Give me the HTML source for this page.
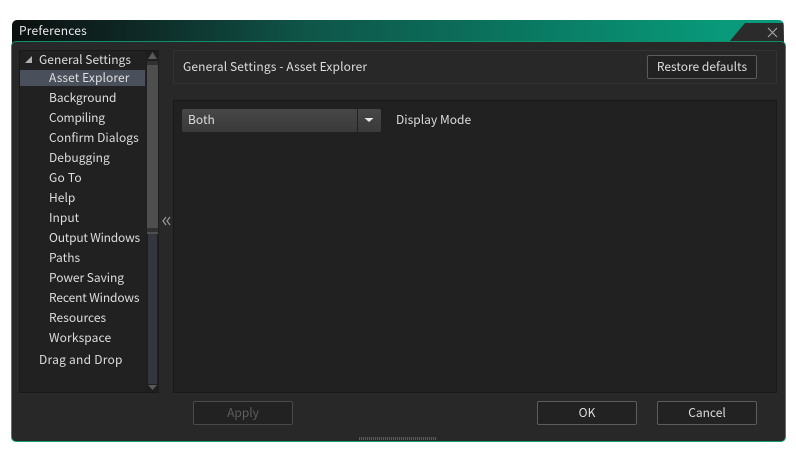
<!DOCTYPE html>
<html><head><meta charset="utf-8"><style>
html,body{margin:0;padding:0;background:#fff;width:796px;height:460px;overflow:hidden}
*{box-sizing:border-box}
body{font-family:"Noto Sans CJK JP","DejaVu Sans","Liberation Sans",sans-serif;font-size:12px;color:#dedede}
.a{position:absolute}
.t{position:absolute;white-space:nowrap;line-height:16px;height:16px;letter-spacing:.03px}
.btn{position:absolute;height:24px;width:100px;border:1px solid #5c5c5c;border-radius:2px;background:#222;text-align:center;line-height:21px;color:#dedede}
</style></head><body>
<div class="a" style="left:12px;top:20px;width:772px;height:30px;border-radius:5px 5px 0 0;background:linear-gradient(90deg,#0c0f0f 0%,#0e2c28 18%,#0f5548 38%,#0b6f5b 60%,#089a7a 92%,#089a7a 100%)"></div>
<svg class="a" style="left:729px;top:23px" width="56" height="20"><polygon points="0,19 16,0 54,0 55,19" fill="#2b2b2b"/><path d="M39 5L48 14M48 5L39 14" stroke="#a9a9a9" stroke-width="1.1" fill="none"/></svg>
<div class="t" style="left:19px;top:23px;color:#e8e8e8;letter-spacing:.2px">Preferences</div>
<div class="a" style="left:11px;top:41px;width:775px;height:401px;border:1px solid #17996f;border-top-color:#0e9068;border-radius:5px;background:#282828"></div>
<div class="a" style="left:19px;top:50px;width:140px;height:343px;background:#212121;border:1px solid #191919"></div>
<div class="a" style="left:20px;top:70px;width:125px;height:16px;background:#4a505b"></div>
<div class="a" style="left:146px;top:51px;width:13px;height:341px;background:#1e1e1e"></div>
<div class="a" style="left:147px;top:64px;width:11px;height:170px;background:#4e4e4e"></div>
<div class="a" style="left:147px;top:228px;width:11px;height:4px;background:#303030"></div>
<div class="a" style="left:147px;top:61px;width:11px;height:4px;background:#303030"></div>
<div class="a" style="left:148px;top:234px;width:9px;height:150px;background:#33373d"></div>
<svg class="a" style="left:146px;top:51px" width="13" height="10"><polygon points="6.5,1 11,8 2,8" fill="#5a5a5a"/></svg>
<svg class="a" style="left:146px;top:384px" width="13" height="8"><polygon points="2,1 11,1 6.5,6" fill="#5a5a5a"/></svg>
<svg class="a" style="left:24px;top:55px" width="10" height="10"><polygon points="1,8 8,8 8,1" fill="#b0b0b0"/></svg>
<div class="t" style="left:39px;top:52px">General Settings</div>
<div class="t" style="left:49px;top:70px;letter-spacing:.1px">Asset Explorer</div>
<div class="t" style="left:49px;top:90px;letter-spacing:-.05px">Background</div>
<div class="t" style="left:49px;top:110px;letter-spacing:-.2px">Compiling</div>
<div class="t" style="left:49px;top:130px">Confirm Dialogs</div>
<div class="t" style="left:49px;top:150px">Debugging</div>
<div class="t" style="left:49px;top:170px;letter-spacing:.2px">Go To</div>
<div class="t" style="left:49px;top:190px">Help</div>
<div class="t" style="left:49px;top:210px">Input</div>
<div class="t" style="left:49px;top:230px;letter-spacing:-.2px">Output Windows</div>
<div class="t" style="left:49px;top:250px">Paths</div>
<div class="t" style="left:49px;top:270px;letter-spacing:-.05px">Power Saving</div>
<div class="t" style="left:49px;top:290px;letter-spacing:-.13px">Recent Windows</div>
<div class="t" style="left:49px;top:310px">Resources</div>
<div class="t" style="left:49px;top:330px;letter-spacing:.12px">Workspace</div>
<div class="t" style="left:39px;top:352px;letter-spacing:.25px">Drag and Drop</div>
<svg class="a" style="left:161px;top:215px" width="11" height="12"><path d="M5 2L2 6L5 10M9 2L6 6L9 10" stroke="#9a9a9a" stroke-width="1.2" fill="none"/></svg>
<div class="a" style="left:173px;top:50px;width:604px;height:34px;border:1px solid #333;border-radius:2px;background:#282828"></div>
<div class="t" style="left:183px;top:59px;letter-spacing:.12px">General Settings - Asset Explorer</div>
<div class="btn" style="left:647px;top:55px;width:110px">Restore defaults</div>
<div class="a" style="left:173px;top:100px;width:604px;height:293px;background:#212121;border:1px solid #191919"></div>
<div class="a" style="left:182px;top:109px;width:175px;height:23px;background:linear-gradient(#474747,#3a3a3a);border-radius:2px 0 0 2px"></div>
<div class="a" style="left:358px;top:109px;width:23px;height:23px;background:linear-gradient(#474747,#3a3a3a);border-radius:0 2px 2px 0"></div>
<svg class="a" style="left:358px;top:109px" width="23" height="23"><polygon points="6.5,9 15.5,9 11,13" fill="#e8e8e8"/></svg>
<div class="t" style="left:188px;top:112px">Both</div>
<div class="t" style="left:396px;top:112px">Display Mode</div>
<div class="btn" style="left:193px;top:401px;color:#5e5e5e;border-color:#4a4a4a">Apply</div>
<div class="btn" style="left:537px;top:401px">OK</div>
<div class="btn" style="left:657px;top:401px">Cancel</div>
<div class="a" style="left:359px;top:437px;width:78px;height:3px;background:repeating-linear-gradient(90deg,#5a5a5a 0 1px,#2c2c2c 1px 2px)"></div>
</body></html>
